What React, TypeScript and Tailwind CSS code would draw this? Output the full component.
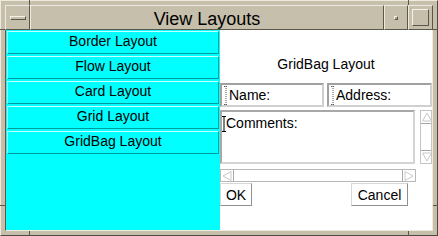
import React from 'react';

const font = { fontFamily: '"Liberation Sans", Arial, sans-serif' };

function Caret({ dotted, h = 19 }: { dotted?: boolean; h?: number }) {
    const c = dotted ? '#555' : '#000';
    const dash = dotted ? '1 1' : undefined;
    return (
        <svg width="4" height={h} viewBox={`0 0 4 ${h}`} className="shrink-0">
            <path d={`M0 0.5h4M0 ${h - 0.5}h4`} stroke={c} strokeDasharray={dash} />
            <path d={`M2 0v${h}`} stroke={c} strokeDasharray={dash} />
        </svg>
    );
}

function Arrow({ dir }: { dir: 'up' | 'down' | 'left' | 'right' }) {
    const pts = {
        up: '1.5,10 6,2 10.5,10',
        down: '1.5,2 6,10 10.5,2',
        left: '10,1.5 2,6 10,10.5',
        right: '2,1.5 10,6 2,10.5',
    }[dir];
    return (
        <svg width="12" height="12" viewBox="0 0 12 12" className="shrink-0">
            <polygon points={pts} fill="#fff" stroke="#c8c8c8" strokeWidth="1" />
        </svg>
    );
}

function SideButton({ label }: { label: string }) {
    return (
        <div className="h-[23px] flex justify-center pt-[1px] border border-t-[#c8ffff] border-l-[#c8ffff] border-b-[#009c9c] border-r-[#009c9c] bg-[#00ffff] text-[14px] leading-[16px] text-black">
            {label}
        </div>
    );
}

export default function App() {
    const layouts = ['Border Layout', 'Flow Layout', 'Card Layout', 'Grid Layout', 'GridBag Layout'];

    return (
        <div style={font} className="relative w-[438px] h-[236px] bg-[#c6bfab] border border-t-[#eeeae0] border-l-[#eeeae0] border-b-[#4f4a3f] border-r-[#4f4a3f] p-[4px] flex flex-col">
            {/* resize ticks */}
            <div className="absolute left-[28px] top-[-1px] w-[1px] h-[5px] bg-[#5c574b]" />
            <div className="absolute left-[407px] top-[-1px] w-[1px] h-[5px] bg-[#5c574b]" />
            <div className="absolute left-[28px] bottom-[-1px] w-[1px] h-[5px] bg-[#5c574b]" />
            <div className="absolute left-[407px] bottom-[-1px] w-[1px] h-[5px] bg-[#5c574b]" />
            <div className="absolute left-[-1px] top-[28px] w-[5px] h-[1px] bg-[#5c574b]" />
            <div className="absolute right-[-1px] top-[28px] w-[5px] h-[1px] bg-[#5c574b]" />
            <div className="absolute left-[-1px] top-[204px] w-[5px] h-[1px] bg-[#5c574b]" />
            <div className="absolute right-[-1px] top-[204px] w-[5px] h-[1px] bg-[#5c574b]" />

            {/* Title bar */}
            <div className="flex h-[25px] shrink-0">
                <div className="w-[25px] flex items-center justify-center border border-t-[#eeeae0] border-l-[#eeeae0] border-b-[#5c574b] border-r-[#5c574b]">
                    <div className="w-[16px] h-[4px] bg-[#c6bfab] border border-t-[#f4f1e8] border-l-[#f4f1e8] border-b-[#5c574b] border-r-[#5c574b]" />
                </div>
                <div className="flex-1 flex justify-center pt-[3px] border border-t-[#eeeae0] border-l-[#eeeae0] border-b-[#5c574b] border-r-[#5c574b] text-[18px] leading-[20px] text-black">
                    View Layouts
                </div>
                <div className="w-[24px] flex items-center justify-center border border-t-[#eeeae0] border-l-[#eeeae0] border-b-[#5c574b] border-r-[#5c574b]">
                    <div className="w-[4px] h-[4px] bg-[#a8a190] border border-t-[#f4f1e8] border-l-[#f4f1e8] border-b-[#5c574b] border-r-[#5c574b]" />
                </div>
                <div className="w-[25px] flex items-center justify-center border border-t-[#eeeae0] border-l-[#eeeae0] border-b-[#5c574b] border-r-[#5c574b]">
                    <div className="w-[17px] h-[17px] border border-t-[#f4f1e8] border-l-[#f4f1e8] border-b-[#5c574b] border-r-[#5c574b]" />
                </div>
            </div>

            {/* Content */}
            <div className="flex flex-1 border-l border-l-[#5c574b] border-r border-r-[#eeeae0] border-b border-b-[#eeeae0]">
                <div className="w-[214px] bg-[#00ffff] flex flex-col gap-[2px] pt-[1px] px-[1px]">
                    {layouts.map((l) => (
                        <SideButton key={l} label={l} />
                    ))}
                </div>

                <div className="flex-1 bg-white flex flex-col text-[14px] leading-[16px] text-black">
                    <div className="pt-[26px] text-center">GridBag Layout</div>

                    <div className="flex gap-[3px] mt-[11px]">
                        <div className="w-[104px] h-[24px] flex items-center gap-[1px] pl-[2px] border-2 border-t-[#a0a0a0] border-l-[#a0a0a0] border-b-[#d0d0d0] border-r-[#d0d0d0]">
                            <Caret dotted />
                            <span>Name:</span>
                        </div>
                        <div className="flex-1 h-[24px] flex items-center gap-[1px] pl-[2px] border-2 border-t-[#a0a0a0] border-l-[#a0a0a0] border-b-[#d0d0d0] border-r-[#d0d0d0]">
                            <Caret dotted />
                            <span>Address:</span>
                        </div>
                    </div>

                    <div className="flex mt-[3px] h-[54px]">
                        <div className="w-[195px] flex items-start pl-[0px] pt-[4px] border-2 border-t-[#a8a8a8] border-l-[#a8a8a8] border-b-[#d4d4d4] border-r-[#d4d4d4]">
                            <Caret h={16} />
                            <span className="mt-[-1px]">Comments:</span>
                        </div>
                        <div className="ml-[5px] w-[12px] flex flex-col border border-[#c4c4c4]">
                            <Arrow dir="up" />
                            <div className="flex-1 border-y border-[#a8a8a8]" />
                            <Arrow dir="down" />
                        </div>
                    </div>

                    <div className="mt-[5px] w-[196px] h-[13px] flex border border-[#b8b8b8]">
                        <Arrow dir="left" />
                        <div className="flex-1 border-x border-[#a8a8a8]" />
                        <Arrow dir="right" />
                    </div>

                    <div className="flex justify-between pr-[24px] mt-[1px]">
                        <div className="w-[32px] h-[23px] flex items-center justify-center border border-t-[#d8d8d8] border-l-[#d8d8d8] border-b-[#909090] border-r-[#909090]">
                            OK
                        </div>
                        <div className="w-[57px] h-[23px] flex items-center justify-center border border-t-[#d8d8d8] border-l-[#d8d8d8] border-b-[#909090] border-r-[#909090]">
                            Cancel
                        </div>
                    </div>
                </div>
            </div>
        </div>
    );
}
